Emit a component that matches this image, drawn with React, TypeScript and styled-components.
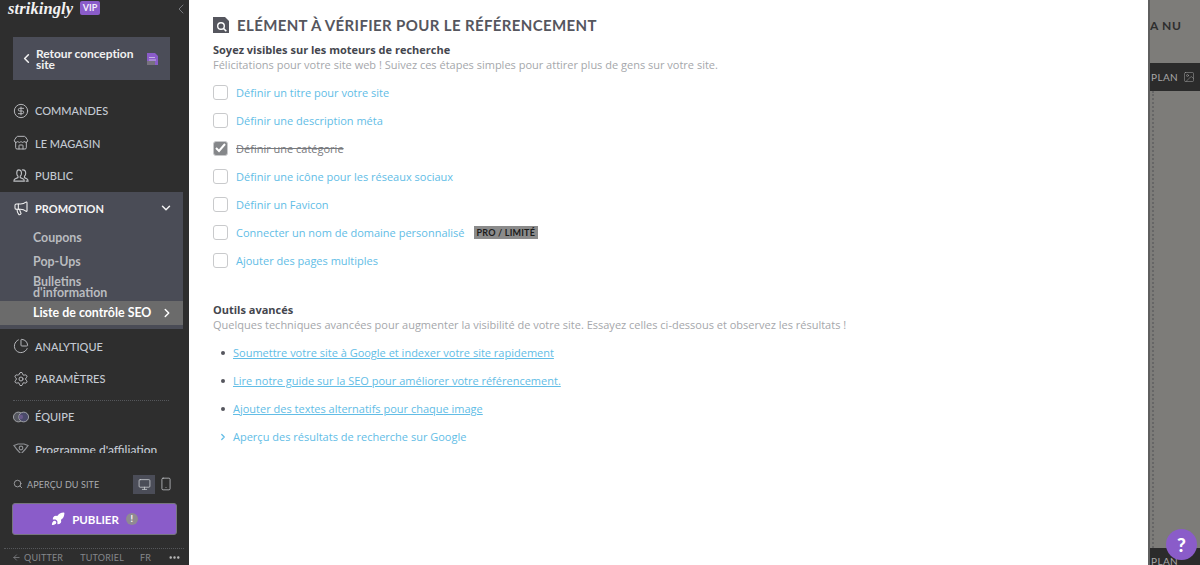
import React from "react";
import styled, { createGlobalStyle } from "styled-components";
import {
  ArrowLeft,
  ChartPie,
  ChevronDown,
  ChevronLeft,
  ChevronRight,
  CircleDollarSign,
  Ellipsis,
  Image,
  Megaphone,
  Monitor,
  Rocket,
  Search,
  Settings,
  Smartphone,
  Store,
} from "lucide-react";

const GlobalStyle = createGlobalStyle`
  html, body {
    margin: 0;
    padding: 0;
    width: 1200px;
    height: 565px;
    overflow: hidden;
    background: #7d7c79;
    font-family: "Open Sans", sans-serif;
  }
  * { box-sizing: border-box; }
`;

const Page = styled.div`
  position: relative;
  display: flex;
  width: 1200px;
  height: 565px;
  overflow: hidden;
`;

const Sidebar = styled.aside`
  width: 189px;
  height: 565px;
  flex: none;
  display: flex;
  flex-direction: column;
  background: #2e2e2e;
  color: #c9ced6;
  overflow: hidden;
`;

const Brand = styled.div`
  height: 37px;
  flex: none;
  padding: 0 0 0 8px;
  display: flex;
  align-items: flex-start;
  gap: 7px;
`;

const Logo = styled.span`
  font-family: "Liberation Serif", serif;
  font-style: italic;
  font-weight: 700;
  font-size: 16.5px;
  line-height: 17px;
  width: 65px;
  color: #f2f2f2;
  letter-spacing: 0.1px;
`;

const VipTag = styled.span`
  width: 20px;
  height: 14px;
  margin-top: 1px;
  border-radius: 2px;
  background: #8a5cc9;
  color: #f3eefb;
  font-family: Lato, sans-serif;
  font-size: 9px;
  font-weight: 700;
  line-height: 14px;
  text-align: center;
`;

const Collapse = styled.span`
  margin-left: auto;
  margin-top: 1px;
  color: #77797d;
  display: flex;
`;

const BackButton = styled.div`
  width: 157px;
  height: 43px;
  flex: none;
  margin-left: 13px;
  padding: 0 12px 0 6px;
  display: flex;
  align-items: center;
  background: #4b4d58;
  color: #f1f1f1;
  font-family: Lato, sans-serif;
  font-size: 12px;
  font-weight: 700;
  line-height: 11px;
`;

const BackLabel = styled.span`
  flex: 1;
  margin-left: 2px;
  letter-spacing: -0.05px;
`;

const NavList = styled.nav`
  height: 373px;
  padding-top: 14.5px;
  flex: none;
  overflow: hidden;
`;

const NavItem = styled.div<{ $active?: boolean; $plain?: boolean }>`
  height: 32.5px;
  padding: 0 10px 0 13px;
  width: 183px;
  display: flex;
  align-items: center;
  gap: 6px;
  font-family: Lato, sans-serif;
  font-size: ${(p) => (p.$plain ? "12px" : "11px")};
  font-weight: ${(p) => (p.$active ? 700 : 500)};
  color: ${(p) => (p.$active ? "#f4f4f4" : "#c4cad3")};
  white-space: nowrap;
`;

const NavIcon = styled.span`
  width: 16px;
  height: 16px;
  flex: none;
  display: flex;
  align-items: center;
  justify-content: center;
  color: #bfc1c5;
`;

const Arrow = styled.span`
  margin-left: auto;
  display: flex;
  color: #f4f4f4;
`;

const ActiveGroup = styled.div`
  width: 183px;
  background: #4a4c56;
  height: 137px;
  margin-bottom: 1px;
`;

const SubItem = styled.div<{ $height: number }>`
  height: ${(p) => p.$height}px;
  padding-left: 33px;
  display: flex;
  align-items: center;
  font-family: Lato, sans-serif;
  font-size: 12.4px;
  font-weight: 700;
  line-height: 11px;
  color: #b9bbbf;
`;

const SeoItem = styled.div`
  height: 24px;
  padding: 0 9px 0 33px;
  display: flex;
  align-items: center;
  justify-content: space-between;
  background: #6b6b6b;
  font-family: Lato, sans-serif;
  font-size: 12.4px;
  font-weight: 700;
  color: #fff;
`;

const NavSeparator = styled.div`
  margin: 4.5px 0 0 13px;
  width: 156px;
  border-top: 1px dotted #55575b;
`;

const PreviewRow = styled.div`
  height: 50px;
  flex: none;
  padding: 12px 12px 0 13px;
  display: flex;
  align-items: center;
  gap: 4px;
  font-family: Lato, sans-serif;
  font-size: 9px;
  letter-spacing: 0.1px;
  color: #a9abaf;
`;

const DeviceButton = styled.span<{ $active?: boolean }>`
  width: 22px;
  height: 19px;
  display: flex;
  align-items: center;
  justify-content: center;
  background: ${(p) => (p.$active ? "#4b4d58" : "transparent")};
  color: #c9cbcf;
  margin-left: ${(p) => (p.$active ? "auto" : "0")};
  margin-right: ${(p) => (p.$active ? "-4px" : "0")};
`;

const PublishButton = styled.button`
  width: 165px;
  height: 32px;
  flex: none;
  margin-left: 12px;
  padding: 0;
  border: 1px solid #77767f;
  border-radius: 3px;
  background: #8a5cc9;
  color: #fff;
  display: flex;
  align-items: center;
  justify-content: center;
  gap: 7px;
  font-family: Lato, sans-serif;
  font-size: 11.5px;
  font-weight: 700;
`;

const Warning = styled.span`
  width: 12px;
  height: 12px;
  border-radius: 50%;
  background: #8f8a92;
  color: #fff;
  font-size: 9px;
  line-height: 12px;
  text-align: center;
`;

const Footer = styled.div`
  margin: 13px 5px 0 4px;
  padding: 2px 0 0 8px;
  border-top: 1px dotted #55575b;
  display: flex;
  align-items: center;
  flex: none;
  height: 16px;
  font-family: Lato, sans-serif;
  font-size: 9px;
  letter-spacing: 0.2px;
  color: #85878b;
  white-space: nowrap;
`;

const FooterLink = styled.span<{ $left: number }>`
  margin-left: ${(p) => p.$left}px;
  display: flex;
  align-items: center;
`;

const QuitArrow = styled.span`
  display: flex;
  margin-right: 3px;
`;

const Main = styled.main`
  width: 959px;
  height: 565px;
  flex: none;
  background: #fff;
  padding: 15.5px 0 0 24px;
`;

const Title = styled.h1`
  margin: 0 0 8.5px;
  height: 18px;
  display: flex;
  align-items: center;
  gap: 8px;
  font-family: Lato, sans-serif;
  font-size: 15px;
  font-weight: 700;
  letter-spacing: 0.37px;
  color: #55565e;
`;

const SectionTitle = styled.h2`
  margin: 0;
  font-size: 11px;
  line-height: 15px;
  font-weight: 700;
  color: #44464e;
`;

const SectionText = styled.p`
  margin: 0;
  font-size: 11px;
  line-height: 15px;
  color: #a5a7ab;
`;

const CheckList = styled.ul`
  margin: 6px 0 0;
  padding: 0;
  list-style: none;
`;

const CheckRow = styled.li<{ $done?: boolean }>`
  height: 28px;
  display: flex;
  align-items: center;
  gap: 8px;
  font-size: 11px;
  color: ${(p) => (p.$done ? "#77797d" : "#62bde6")};
  text-decoration: ${(p) => (p.$done ? "line-through" : "none")};
`;

const CheckBox = styled.span<{ $done?: boolean }>`
  width: 15px;
  height: 15px;
  flex: none;
  border: 1px solid #c9cacc;
  border-radius: 3px;
  background: ${(p) => (p.$done ? "#85878a" : "#fff")};
  display: flex;
  align-items: center;
  justify-content: center;
  color: #fff;
`;

const ProTag = styled.span`
  margin-left: 1px;
  height: 13px;
  padding: 0 3px;
  background: #8b8b8b;
  color: #1c1c1c;
  font-family: Lato, sans-serif;
  font-size: 9px;
  font-weight: 700;
  line-height: 13px;
  letter-spacing: 0.2px;
`;

const Advanced = styled.section`
  margin-top: 28px;
`;

const LinkList = styled.ul`
  margin: 6.5px 0 0;
  padding: 0;
  list-style: none;
`;

const LinkRow = styled.li`
  height: 28px;
  display: flex;
  align-items: center;
  font-size: 11px;
  color: #62bde6;
`;

const Marker = styled.span<{ $arrow?: boolean }>`
  width: 20px;
  padding-left: ${(p) => (p.$arrow ? "5px" : "8px")};
  flex: none;
  display: flex;
  align-items: center;
  color: #62bde6;
`;

const Bullet = styled.span`
  width: 4px;
  height: 4px;
  border-radius: 50%;
  background: #55565e;
`;

const Anchor = styled.a`
  color: #62bde6;
  text-decoration: underline;
`;

const Backdrop = styled.div`
  flex: 1;
  height: 565px;
  display: flex;
  flex-direction: column;
  overflow: hidden;
  background: #7d7c79;
  border-left: 2px solid #5f5f5f;
  font-family: Lato, sans-serif;
`;

const BackdropHeading = styled.div`
  height: 63px;
  flex: none;
  padding: 18px 0 0 0;
  font-size: 12px;
  font-weight: 700;
  letter-spacing: 0.6px;
  color: #2e2e2e;
  white-space: nowrap;
`;

const PlanBar = styled.div<{ $clipped?: boolean }>`
  height: ${(p) => (p.$clipped ? "17px" : "28px")};
  flex: none;
  padding: ${(p) => (p.$clipped ? "9px 0 0 1px" : "0 0 0 1px")};
  display: flex;
  align-items: center;
  gap: 5px;
  background: #2b2b2b;
  color: #a8a8a8;
  font-size: 10px;
  letter-spacing: 0.4px;
`;

const BackdropFill = styled.div`
  height: 457px;
  flex: none;
  margin-left: 2px;
  border-left: 2px dotted #666;
`;

const HelpButton = styled.button`
  position: absolute;
  right: 3px;
  bottom: 5px;
  width: 31px;
  height: 31px;
  padding: 0;
  border: 0;
  border-radius: 50%;
  background: #8a5cc9;
  color: #fff;
  font-family: Lato, sans-serif;
  font-size: 19px;
  font-weight: 900;
`;

const PublicIcon = () => (
  <svg width="17" height="16" viewBox="0 0 17 16" fill="none" stroke="#bfc1c5" strokeWidth="1.2">
    <path d="M6 1.500c1.900 0 3 1.500 3 3.500 0 1.300-.5 2.500-1.300 3.200v1.500l3.300 1.600c.8.400 1 1 1 2.200H1c0-1.200.2-1.800 1-2.200l3.300-1.600V8.200C4.500 7.500 4 6.300 4 5c0-2 .9-3.500 2-3.500z" />
    <path d="M9.500 1.600c.4-.1.700-.1 1-.1 1.900 0 3 1.500 3 3.500 0 1.300-.5 2.500-1.300 3.200v1.500l2.800 1.400c.8.400 1 1 1 2.400h-2.500" />
  </svg>
);

const TeamIcon = () => (
  <svg width="18" height="14" viewBox="0 0 18 14" fill="none">
    <circle cx="6" cy="7" r="5.500" stroke="#a9abaf" strokeWidth="1" fill="#55575f" />
    <circle cx="12" cy="7" r="5.500" stroke="#a9abaf" strokeWidth="1" fill="#4a4a6a" />
    <circle cx="9" cy="7" r="2.400" fill="#6a5a8a" />
  </svg>
);

const AffiliateIcon = () => (
  <svg width="16" height="12" viewBox="0 0 16 12" fill="none" stroke="#8d8f93" strokeWidth="1.200">
    <path d="M1 2.500 5 1h6l4 1.500-3 4-4 4.500-4-4.500z" />
    <circle cx="8" cy="5" r="1.800" />
  </svg>
);

const PageDocIcon = () => (
  <svg width="11" height="12" viewBox="0 0 11 12">
    <path d="M0 0h8l3 3v9H0z" fill="#8a5cc9" />
    <path d="M2 4h6v1H2zM2 6.500h7v1H2z" fill="#c5b3e3" />
    <path d="M0 8h8v4H0z" fill="#77727f" />
  </svg>
);

const SeoDocIcon = () => (
  <svg width="16" height="16" viewBox="0 0 16 16">
    <path d="M0 0h12l4 4v12H0z" fill="#55565e" />
    <circle cx="8" cy="9" r="3.300" fill="none" stroke="#fff" strokeWidth="1.400" />
    <path d="m10.300 11.300 3 3" stroke="#fff" strokeWidth="1.600" />
  </svg>
);

const CHECKS = [
  { label: "Définir un titre pour votre site" },
  { label: "Définir une description méta" },
  { label: "Définir une catégorie", done: true },
  { label: "Définir une icône pour les réseaux sociaux" },
  { label: "Définir un Favicon" },
  { label: "Connecter un nom de domaine personnalisé", tag: "PRO / LIMITÉ" },
  { label: "Ajouter des pages multiples" },
];

const LINKS = [
  "Soumettre votre site à Google et indexer votre site rapidement",
  "Lire notre guide sur la SEO pour améliorer votre référencement.",
  "Ajouter des textes alternatifs pour chaque image",
];

export default function App() {
  return (
    <Page>
      <GlobalStyle />
      <Sidebar>
        <Brand>
          <Logo>strikingly</Logo>
          <VipTag>VIP</VipTag>
          <Collapse>
            <ChevronLeft size={16} strokeWidth={1.5} />
          </Collapse>
        </Brand>
        <BackButton>
          <ChevronLeft size={15} strokeWidth={2.5} />
          <BackLabel>
            Retour conception
            <br />
            site
          </BackLabel>
          <PageDocIcon />
        </BackButton>
        <NavList>
          <NavItem>
            <NavIcon><CircleDollarSign size={16} strokeWidth={1.4} /></NavIcon>
            COMMANDES
          </NavItem>
          <NavItem>
            <NavIcon><Store size={16} strokeWidth={1.4} /></NavIcon>
            LE MAGASIN
          </NavItem>
          <NavItem>
            <NavIcon><PublicIcon /></NavIcon>
            PUBLIC
          </NavItem>
          <ActiveGroup>
            <NavItem $active>
              <NavIcon><Megaphone size={16} strokeWidth={1.6} color="#f4f4f4" /></NavIcon>
              PROMOTION
              <Arrow><ChevronDown size={14} strokeWidth={2.5} /></Arrow>
            </NavItem>
            <SubItem $height={25}>Coupons</SubItem>
            <SubItem $height={24}>Pop-Ups</SubItem>
            <SubItem $height={27}>
              Bulletins
              <br />
              d'information
            </SubItem>
            <SeoItem>
              Liste de contrôle SEO
              <ChevronRight size={14} strokeWidth={2.5} />
            </SeoItem>
          </ActiveGroup>
          <NavItem>
            <NavIcon><ChartPie size={16} strokeWidth={1.4} /></NavIcon>
            ANALYTIQUE
          </NavItem>
          <NavItem>
            <NavIcon><Settings size={16} strokeWidth={1.4} /></NavIcon>
            PARAMÈTRES
          </NavItem>
          <NavSeparator />
          <NavItem>
            <NavIcon><TeamIcon /></NavIcon>
            ÉQUIPE
          </NavItem>
          <NavItem $plain>
            <NavIcon><AffiliateIcon /></NavIcon>
            Programme d'affiliation
          </NavItem>
        </NavList>
        <PreviewRow>
          <Search size={10} strokeWidth={2} />
          APERÇU DU SITE
          <DeviceButton $active><Monitor size={13} strokeWidth={1.5} /></DeviceButton>
          <DeviceButton><Smartphone size={14} strokeWidth={1.3} /></DeviceButton>
        </PreviewRow>
        <PublishButton>
          <Rocket size={14} fill="#fff" />
          PUBLIER
          <Warning>!</Warning>
        </PublishButton>
        <Footer>
          <QuitArrow><ArrowLeft size={9} strokeWidth={2} /></QuitArrow>
          QUITTER
          <FooterLink $left={17}>TUTORIEL</FooterLink>
          <FooterLink $left={16}>FR</FooterLink>
          <FooterLink $left={17}><Ellipsis size={13} strokeWidth={2.5} color="#c0c0c0" /></FooterLink>
        </Footer>
      </Sidebar>
      <Main>
        <Title>
          <SeoDocIcon />
          ELÉMENT À VÉRIFIER POUR LE RÉFÉRENCEMENT
        </Title>
        <SectionTitle>Soyez visibles sur les moteurs de recherche</SectionTitle>
        <SectionText>
          Félicitations pour votre site web ! Suivez ces étapes simples pour attirer plus de gens sur votre site.
        </SectionText>
        <CheckList>
          {CHECKS.map((item) => (
            <CheckRow key={item.label} $done={item.done}>
              <CheckBox $done={item.done}>
                {item.done && (
                  <svg width="11" height="10" viewBox="0 0 11 10" fill="none" stroke="#fff" strokeWidth="2">
                    <path d="m1 5 3 3 6-7" />
                  </svg>
                )}
              </CheckBox>
              {item.label}
              {item.tag && <ProTag>{item.tag}</ProTag>}
            </CheckRow>
          ))}
        </CheckList>
        <Advanced>
          <SectionTitle>Outils avancés</SectionTitle>
          <SectionText>
            Quelques techniques avancées pour augmenter la visibilité de votre site. Essayez celles ci-dessous et observez les résultats !
          </SectionText>
          <LinkList>
            {LINKS.map((text) => (
              <LinkRow key={text}>
                <Marker><Bullet /></Marker>
                <Anchor>{text}</Anchor>
              </LinkRow>
            ))}
            <LinkRow>
              <Marker $arrow><ChevronRight size={10} strokeWidth={3} /></Marker>
              Aperçu des résultats de recherche sur Google
            </LinkRow>
          </LinkList>
        </Advanced>
      </Main>
      <Backdrop>
        <BackdropHeading>A NU</BackdropHeading>
        <PlanBar>
          PLAN
          <Image size={12} strokeWidth={1} />
        </PlanBar>
        <BackdropFill />
        <PlanBar $clipped>PLAN</PlanBar>
      </Backdrop>
      <HelpButton>?</HelpButton>
    </Page>
  );
}
